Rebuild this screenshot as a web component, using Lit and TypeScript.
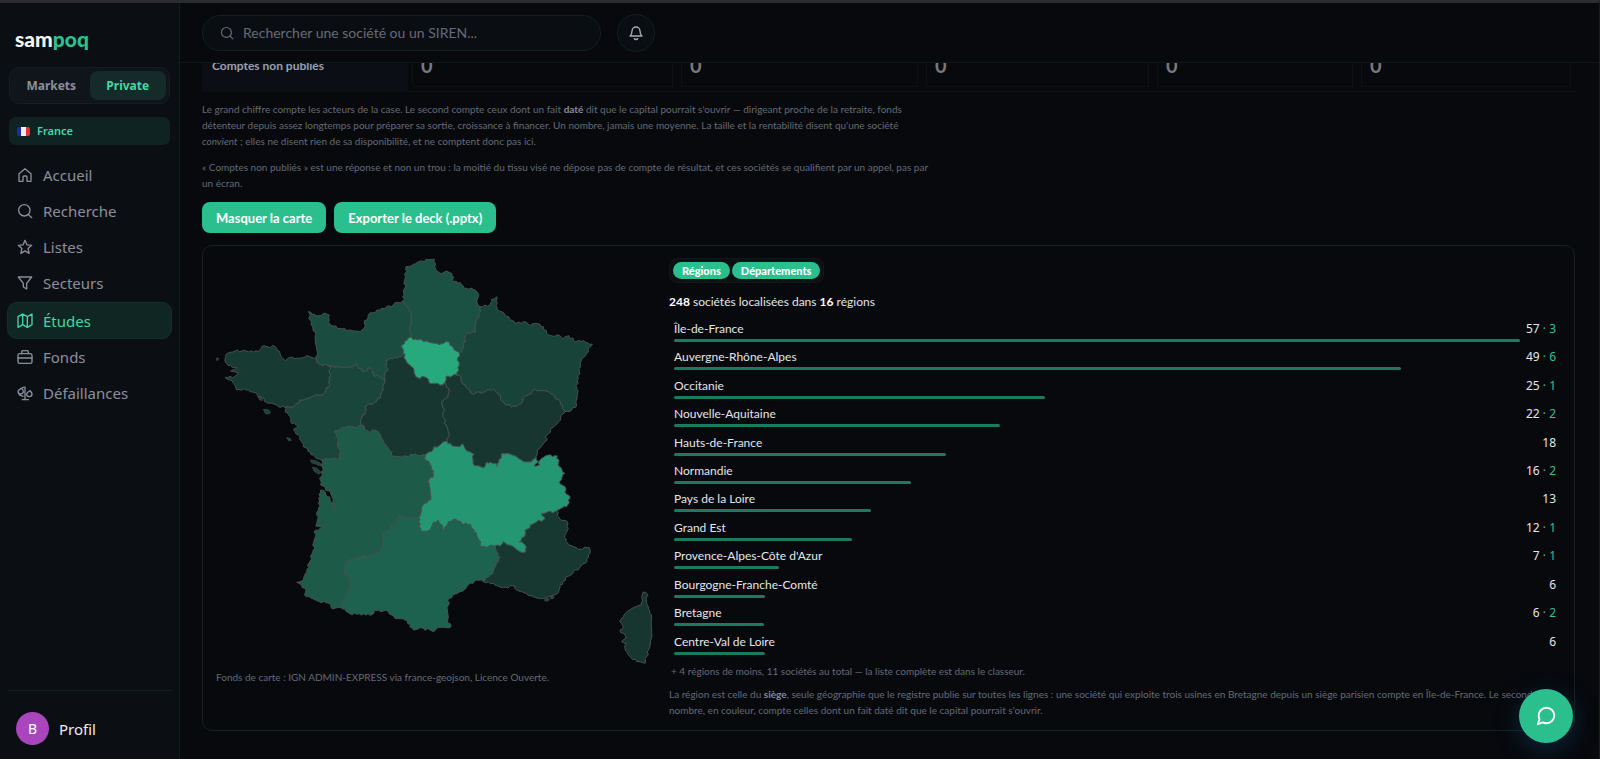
import { LitElement, html, css, svg, nothing } from "lit";
import { customElement } from "lit/decorators.js";
import { classMap } from "lit/directives/class-map.js";

type Pt = [number, number];

/* Coastlines and shared borders, each traced once and reused by both neighbours. */
const LINES: Record<string, string> = {
  hdfCoast: "1208,903 1212,885 1214,865 1216,830 1218,800 1240,793 1265,783 1285,779 1303,777 1307,807 1320,820 1340,813 1355,820 1362,845 1380,847 1393,865 1425,870 1437,883 1432,910 1440,920",
  hdfGe: "1440,920 1438,950 1427,970 1425,997 1405,999 1395,1010 1397,1020 1388,1045 1378,1060",
  hdfIdf: "1378,1060 1368,1053 1358,1040 1348,1027 1330,1031 1305,1030 1280,1023 1260,1017 1240,1020 1232,1011",
  hdfNor: "1232,1011 1232,975 1235,950 1225,925 1208,903",
  norCoast: "1208,903 1180,915 1145,925 1105,945 1093,970 1092,985 1080,995 1055,991 1020,985 995,978 985,967 988,945 970,940 955,947 925,935 930,960 938,980 947,1005 948,1035 950,1078",
  norBre: "950,1078 958,1093 990,1099",
  norPdl: "990,1099 1040,1101 1070,1092 1085,1113 1112,1105 1120,1123 1155,1143",
  norCvl: "1155,1143 1153,1130 1163,1105 1157,1080 1205,1070 1210,1057",
  norIdf: "1210,1057 1205,1035 1222,1020 1232,1011",
  idfCvl: "1210,1057 1218,1080 1235,1100 1248,1130 1280,1133 1290,1151 1320,1155 1335,1147",
  idfBfc: "1335,1147 1338,1130 1370,1125",
  idfGe: "1370,1125 1378,1095 1372,1080 1378,1060",
  geCoast: "1440,920 1470,915 1475,898 1490,890 1492,930 1515,945 1545,970 1570,965 1590,977 1605,970 1630,980 1645,1005 1670,1005 1690,1017 1707,1007 1720,1022 1750,1022 1777,1032 1760,1060 1743,1085 1735,1135 1730,1165 1730,1215 1710,1235 1692,1230",
  geBfc: "1692,1230 1678,1200 1645,1175 1605,1168 1570,1195 1565,1210 1535,1222 1505,1203 1500,1185 1480,1167 1450,1177 1412,1180 1395,1155 1382,1140 1380,1127 1370,1125",
  bfcCoast: "1692,1230 1688,1243 1675,1265 1640,1305 1638,1323 1612,1350 1608,1370",
  bfcAra: "1608,1370 1595,1385 1570,1385 1550,1370 1522,1360 1505,1360 1492,1400 1485,1390 1460,1387 1452,1403 1425,1398 1418,1375 1422,1363 1400,1353 1388,1332 1380,1340 1355,1337 1342,1325",
  bfcCvl: "1342,1325 1345,1295 1340,1275 1328,1250 1335,1230 1325,1205 1340,1195 1348,1175 1338,1153 1335,1147",
  cvlAra: "1342,1325 1328,1327 1318,1337 1302,1340 1295,1355 1276,1365",
  cvlNaq: "1276,1365 1240,1365 1205,1372 1180,1370 1165,1345 1150,1325 1130,1293 1105,1295 1085,1275",
  cvlPdl: "1085,1275 1085,1255 1097,1235 1095,1220 1130,1205 1150,1170 1155,1143",
  pdlNaq: "1085,1275 1070,1283 1040,1280 1002,1295 1015,1315 1020,1375 990,1377 965,1380",
  pdlCoast: "965,1380 945,1370 910,1340 900,1310 880,1290 895,1280 875,1270 870,1250 855,1235 862,1220",
  pdlBre: "862,1220 885,1217 900,1200 955,1185 970,1183 988,1160 990,1099",
  breCoast: "862,1220 835,1220 805,1210 780,1190 745,1170 710,1170 700,1150 675,1132 705,1130 715,1118 692,1113 710,1103 685,1097 675,1085 678,1063 705,1053 740,1053 775,1055 785,1040 825,1040 840,1060 857,1083 870,1072 900,1075 920,1067 950,1078",
  naqCoast: "965,1380 970,1410 958,1435 962,1455 985,1472 1000,1500 1008,1532 990,1500 975,1475 962,1470 955,1530 947,1578 970,1585 947,1590 940,1650 920,1715 910,1740 890,1747 915,1765 918,1790 950,1802 985,1810 1000,1827 1023,1823",
  naqOcc: "1023,1823 1025,1805 1045,1775 1052,1750 1045,1730 1032,1720 1040,1685 1070,1673 1115,1665 1140,1655 1150,1630 1150,1605 1180,1575 1198,1547 1225,1553 1258,1552",
  naqAra: "1258,1552 1265,1530 1275,1510 1292,1500 1290,1465 1285,1445 1300,1425 1295,1400 1275,1375 1276,1365",
  araOcc: "1258,1552 1262,1592 1285,1593 1300,1568 1315,1560 1333,1593 1345,1565 1367,1557 1385,1570 1410,1572 1430,1605 1445,1640 1487,1636",
  occPac: "1487,1636 1490,1655 1500,1672 1488,1695 1480,1715 1450,1745",
  occCoast: "1450,1745 1430,1740 1400,1760 1380,1775 1348,1795 1342,1830 1343,1860 1353,1880 1310,1885 1300,1895 1270,1885 1240,1890 1215,1860 1185,1855 1165,1835 1120,1830 1118,1843 1070,1843 1045,1838 1035,1827 1023,1823",
  araPac: "1487,1636 1500,1638 1510,1625 1530,1635 1560,1655 1577,1655 1575,1635 1558,1625 1575,1605 1575,1590 1610,1565 1635,1555 1625,1540 1670,1532",
  araCoast: "1670,1532 1700,1520 1710,1495 1695,1475 1695,1460 1678,1445 1695,1420 1678,1400 1672,1368 1645,1365 1620,1380 1618,1395 1602,1398 1615,1385 1608,1370",
  pacCoast: "1670,1532 1680,1558 1702,1565 1705,1585 1695,1605 1705,1635 1735,1648 1768,1643 1770,1660 1755,1690 1720,1715 1680,1755 1675,1778 1630,1795 1600,1790 1580,1780 1550,1770 1545,1758 1510,1762 1480,1750 1450,1745",
  corse: "1928,1778 1940,1780 1945,1820 1955,1850 1955,1900 1945,1950 1935,1990 1910,1985 1885,1965 1875,1945 1880,1932 1865,1925 1878,1915 1860,1890 1870,1880 1860,1865 1870,1850 1890,1830 1925,1815 1925,1790 1928,1778",
};

/* Breaks long straight runs into short irregular steps, deterministically. */
function roughen(pts: Pt[]): Pt[] {
  const out: Pt[] = [pts[0]];
  for (let i = 1; i < pts.length; i++) {
    const [ax, ay] = pts[i - 1];
    const [bx, by] = pts[i];
    const len = Math.hypot(bx - ax, by - ay);
    const steps = Math.max(1, Math.round(len / 7));
    for (let k = 1; k < steps; k++) {
      const t = k / steps;
      const n = Math.sin(ax * 12.9 + by * 78.2 + k * 37.7) * 43758.5;
      const d = (n - Math.floor(n) - 0.5) * 8;
      out.push([
        Math.round(ax + (bx - ax) * t - ((by - ay) / len) * d),
        Math.round(ay + (by - ay) * t + ((bx - ax) / len) * d),
      ]);
    }
    out.push([bx, by]);
  }
  return out;
}

const TRACED: Record<string, Pt[]> = Object.fromEntries(
  Object.entries(LINES).map(([k, v]) => [k, roughen(v.split(" ").map((p) => p.split(",").map(Number) as Pt))]),
);

/* A leading "-" walks the line backwards. */
function outline(keys: string): string {
  const pts = keys.split(" ").flatMap((k) => (k[0] === "-" ? [...TRACED[k.slice(1)]].reverse() : TRACED[k]));
  return "M" + pts.map((p) => p.join(" ")).join("L") + "Z";
}

const REGIONS = [
  { fill: "#1b5143", line: "hdfCoast hdfGe hdfIdf hdfNor" },
  { fill: "#1a4d40", line: "norCoast norBre norPdl norCvl norIdf hdfNor" },
  { fill: "#184338", line: "geCoast geBfc idfGe -hdfGe" },
  { fill: "#173a32", line: "breCoast norBre -pdlBre" },
  { fill: "#19453a", line: "pdlCoast pdlBre norPdl -cvlPdl pdlNaq" },
  { fill: "#16362f", line: "norCvl idfCvl -bfcCvl cvlAra cvlNaq cvlPdl" },
  { fill: "#16362f", line: "bfcCoast bfcAra bfcCvl idfBfc -geBfc" },
  { fill: "#1d5b48", line: "naqCoast naqOcc naqAra cvlNaq pdlNaq" },
  { fill: "#1d614f", line: "occCoast naqOcc araOcc occPac" },
  { fill: "#173830", line: "pacCoast -occPac araPac" },
  { fill: "#259672", line: "araCoast bfcAra cvlAra -naqAra araOcc araPac" },
  { fill: "#27a97d", line: "idfCvl idfBfc idfGe hdfIdf -norIdf" },
  { fill: "#16362f", line: "corse" },
];

const ISLETS = [
  "M651 1073l5 3-3 6-5-3z",
  "M790 1228l14 1 8 7-5 6-10-1z",
  "M860 1313l10 2 4 6-8 1z",
  "M775 1190l10 3 2 8-8-1z",
  "M931 1380l16 2 14 8 2 8-14-5-14-5z",
  "M937 1402l14 3 12 12-6 6-14-9z",
  "M1632 1800l12-6 4 6-8 4z",
  "M1653 1789l10 2-5 6-8-2z",
];

const ROWS: [string, number, number][] = [
  ["Île-de-France", 57, 3],
  ["Auvergne-Rhône-Alpes", 49, 6],
  ["Occitanie", 25, 1],
  ["Nouvelle-Aquitaine", 22, 2],
  ["Hauts-de-France", 18, 0],
  ["Normandie", 16, 2],
  ["Pays de la Loire", 13, 0],
  ["Grand Est", 12, 1],
  ["Provence-Alpes-Côte d'Azur", 7, 1],
  ["Bourgogne-Franche-Comté", 6, 0],
  ["Bretagne", 6, 2],
  ["Centre-Val de Loire", 6, 0],
];

const ICONS = {
  home: svg`<path d="M3 10 12 2.500l9 7.500v11.500h-6V15a1.500 1.500 0 0 0-1.500-1.500h-3A1.500 1.500 0 0 0 9 15v6.500H3z"/>`,
  search: svg`<circle cx="11" cy="11" r="8.500"/><path d="m22 22-4.800-4.800"/>`,
  star: svg`<path d="m12 2 2.900 6.700 7.100.8-5.300 4.800 1.500 7.200-6.200-3.700-6.200 3.700 1.500-7.200L2 9.500l7.100-.8z"/>`,
  filter: svg`<path d="M2 3h20l-7.500 9.500V21l-5-3v-5.500z"/>`,
  map: svg`<path d="M1.500 5.500v16l7-4 7 4 7-4v-16l-7 4-7-4zM8.500 1.500v16M15.500 5.500v16"/>`,
  fund: svg`<rect x="1.500" y="7" width="21" height="14.500" rx="2.500"/><path d="M7 7V4a1.500 1.500 0 0 1 1.500-1.500h7A1.500 1.500 0 0 1 17 4v3M1.500 13.500h21"/>`,
  scale: svg`<path d="M12 3v19M8 22h9M5.500 5.500 10 3.500M1.500 9.500a4 4 0 0 0 8 0c0-2-1.500-3-2.500-4.500-2 1.500-5.500 2.500-5.500 4.500zM14.500 13.500a4 4 0 0 0 8 0c0-2-2-3.500-3-5-2 1.500-5 3-5 5zM3 14.500l6 2.500"/>`,
  bell: svg`<path d="M6 9a6 6 0 0 1 12 0c0 5 3 7.500 3 7.500H3S6 14 6 9"/><path d="M9.500 20.500c.8 1.600 4.200 1.600 5 0"/>`,
  chat: svg`<path d="M21 11.500a8.400 8.400 0 0 1-8.500 8.400 8.700 8.700 0 0 1-4-.9L3 21l1.900-5.500a8.400 8.400 0 0 1-.9-4A8.400 8.400 0 0 1 12.500 3 8.400 8.400 0 0 1 21 11.500z"/>`,
};

const icon = (name: keyof typeof ICONS) =>
  html`<svg class="icon" viewBox="0 0 24 24" aria-hidden="true">${ICONS[name]}</svg>`;

const shared = css`
  * { box-sizing: border-box; }
  p, ul { margin: 0; padding: 0; }
  button { font: inherit; border: 0; cursor: pointer; }
  a { color: inherit; text-decoration: none; }
  .icon { display: block; width: 16px; height: 16px; fill: none; stroke: currentColor; stroke-width: 2; stroke-linecap: round; stroke-linejoin: round; }
`;

@customElement("side-nav")
class SideNav extends LitElement {
  static styles = [shared, css`
    :host { display: flex; flex-direction: column; width: 180px; flex: none; background: #0b0f14; border-right: 1px solid #10201f; color: #8b8f9b; }
    .logo { padding: 21px 15px 0; font: 900 21px/30px Lato, sans-serif; color: #f2f4f6; }
    .logo b { font-weight: 900; color: #2cc191; }
    .modes { display: flex; margin: 13px 9px 0; padding: 3px; border: 1px solid #151c23; border-radius: 10px; background: #10151c; height: 37px; }
    .mode { flex: 1; padding: 0; border-radius: 8px; background: none; color: #8b8f9b; font: 700 12px/29px "Noto Sans", sans-serif; }
    .mode.on { background: #142b29; color: #45d6a5; }
    .country { display: flex; align-items: center; gap: 7px; margin: 13px 9px 0; padding: 0 8px; height: 28px; border-radius: 7px; background: #0f2422; color: #45d6a5; font: 600 11px/28px "Noto Sans", sans-serif; }
    .flag { width: 13px; height: 9px; border-radius: 2px; display: block; }
    nav { display: flex; flex-direction: column; padding: 12px 7px 0; }
    .item { display: flex; align-items: center; gap: 10px; height: 36px; padding: 0 9px; border: 1px solid transparent; border-radius: 10px; font-size: 15px; line-height: 20px; }
    .item.on { height: 37px; margin-top: 1px; background: #0f2623; border-color: #14322d; color: #45d6a5; }
    .profile { display: flex; align-items: center; gap: 10px; margin: auto 7px 0; padding: 21px 9px 14px; border-top: 1px solid #10201f; color: #eceef1; font-size: 15px; line-height: 20px; }
    .avatar { display: grid; place-items: center; width: 33px; height: 33px; border-radius: 50%; background: #a946bd; color: #fff; font-size: 14px; }
  `];
  render() {
    const items: [keyof typeof ICONS, string][] = [
      ["home", "Accueil"], ["search", "Recherche"], ["star", "Listes"], ["filter", "Secteurs"],
      ["map", "Études"], ["fund", "Fonds"], ["scale", "Défaillances"],
    ];
    return html`
      <div class="logo">sam<b>poq</b></div>
      <div class="modes">
        <button class="mode">Markets</button><button class="mode on">Private</button>
      </div>
      <button class="country">
        <svg class="flag" viewBox="0 0 13 9" aria-hidden="true"><path fill="#1b2f9c" d="M0 0h4v9H0z"/><path fill="#f1f1f4" d="M4 0h5v9H4z"/><path fill="#e8303a" d="M9 0h4v9H9z"/></svg>
        France
      </button>
      <nav>
        ${items.map(([i, label]) => html`<a href="#" class=${classMap({ item: true, on: label === "Études" })}>${icon(i)}${label}</a>`)}
      </nav>
      <a href="#" class="profile"><span class="avatar">B</span>Profil</a>
    `;
  }
}

@customElement("top-bar")
class TopBar extends LitElement {
  static styles = [shared, css`
    :host { display: flex; align-items: center; gap: 16px; height: 60px; padding: 0 22px; background: #07090c; border-bottom: 1px solid #0e1717; position: relative; z-index: 1; }
    .search { display: flex; align-items: center; gap: 9px; width: 399px; height: 36px; padding: 0 17px; border: 1px solid #10221f; border-radius: 18px; background: #0a0e13; color: #666b77; }
    .search .icon { width: 14px; height: 14px; flex: none; }
    input { flex: 1; min-width: 0; border: 0; outline: 0; padding: 0; background: none; color: #d7dae0; font: 400 14px/20px Lato, sans-serif; }
    input::placeholder { color: #666b77; opacity: 1; }
    .bell { display: grid; place-items: center; width: 38px; height: 38px; padding: 0; border: 1px solid #10221f; border-radius: 50%; background: #0a0e13; color: #a9adb8; }
  `];
  render() {
    return html`
      <label class="search">${icon("search")}<input type="search" aria-label="Rechercher" placeholder="Rechercher une société ou un SIREN..."></label>
      <button class="bell" aria-label="Notifications">${icon("bell")}</button>
    `;
  }
}

@customElement("france-map")
class FranceMap extends LitElement {
  static styles = css`
    :host { display: block; }
    svg { display: block; width: 100%; height: auto; }
    path { stroke: #47524f; stroke-width: 3; stroke-linejoin: round; }
    .islet { fill: #1a453a; stroke-width: 2; }
  `;
  render() {
    return html`<svg viewBox="648 774 1320 1224" role="img" aria-label="Carte des régions">
      ${ISLETS.map((d) => svg`<path class="islet" d=${d} />`)}
      ${REGIONS.map((r) => svg`<path fill=${r.fill} d=${outline(r.line)} />`)}
    </svg>`;
  }
}

@customElement("region-list")
class RegionList extends LitElement {
  static styles = [shared, css`
    :host { display: block; }
    ul { display: grid; grid-auto-rows: 1fr; min-height: 341px; list-style: none; padding: 0 5px; }
    li { display: grid; grid-template-columns: 1fr auto; column-gap: 6px; row-gap: 2px; align-content: start; color: #e4e6ea; font-size: 12px; line-height: 17px; }
    .bar { height: 3px; border-radius: 2px; background: #1c7b5e; }
    .count { grid-column: 2; grid-row: 1 / 3; font-family: "Noto Sans", sans-serif; }
    .dated { color: #2cc191; }
  `];
  render() {
    const max = ROWS[0][1];
    return html`<ul>
      ${ROWS.map(([name, n, dated]) => html`<li>
        <span>${name}</span>
        <span class="count">${n}${dated ? html`<span class="dated"> · ${dated}</span>` : nothing}</span>
        <div class="bar" style="width:${(n / max) * 100}%"></div>
      </li>`)}
    </ul>`;
  }
}

@customElement("app-root")
class AppRoot extends LitElement {
  static styles = [shared, css`
    :host { display: flex; min-height: 100vh; border-top: 3px solid #2b2b30; border-right: 1px solid #1b1c20; box-sizing: border-box; background: #07090d; color: #e4e6ea; font-family: "Noto Sans", sans-serif; }
    main { flex: 1; min-width: 0; }
    .page { padding: 0 24px 24px 22px; font-family: Lato, "Noto Sans", sans-serif; }
    table { width: 100%; margin-top: -24px; border-collapse: collapse; table-layout: fixed; }
    .c0 { width: 206px; } .c1 { width: 269px; } .c2 { width: 245px; } .c3 { width: 231px; } .c4 { width: 204px; }
    th { height: 52px; padding: 0 10px; background: #0b0f15; color: #9aa0b4; text-align: left; font-size: 12px; font-weight: 700; }
    td { padding: 0 4px 4px; border-bottom: 1px solid #0c1416; }
    .cell { display: block; width: 100%; height: 48px; padding: 4px 8px 0; border: 1px solid #0b1215; background: none; color: #77797d; text-align: left; font-size: 20px; font-weight: 700; }
    .note { color: #646978; font-size: 10px; line-height: 16px; }
    .note b { color: #8489a0; }
    .first { max-width: 720px; padding-top: 9px; }
    .second { max-width: 732px; padding-top: 10px; }
    .actions { display: flex; gap: 8px; padding: 11px 0 12px; }
    .action { height: 31px; padding: 0 14px; border-radius: 8px; background: #2cbf8e; color: #fff; font-size: 13px; font-weight: 700; }
    .card { display: grid; grid-template-columns: minmax(0, 440px) minmax(0, 1fr); gap: 13px; padding: 12px 13px; border: 1px solid #0d2422; border-radius: 10px; }
    .credit { padding-top: 3px; }
    .scope { display: flex; width: fit-content; gap: 2px; padding: 3px; border: 1px solid #12171b; border-radius: 8px; background: #0c1013; }
    .pill { height: 17px; padding: 0 9px; border-radius: 9px; background: #2cbf8e; color: #fff; font-size: 11px; line-height: 17px; font-weight: 900; }
    .total { padding: 9px 0 8px; font-size: 12px; line-height: 20px; }
    .total b { color: #fff; }
    .more { padding: 2px 2px 7px; }
    .chat { position: fixed; right: 27px; bottom: 16px; display: grid; place-items: center; width: 54px; height: 54px; padding: 0; border-radius: 50%; background: #2cbf8e; color: #fff; box-shadow: 0 6px 24px rgba(30, 90, 150, .35); }
    .chat .icon { width: 22px; height: 22px; }
  `];
  render() {
    return html`
      <side-nav></side-nav>
      <main>
        <top-bar></top-bar>
        <div class="page">
          <table>
            <colgroup><col class="c0"><col class="c1"><col class="c2"><col class="c3"><col class="c4"><col></colgroup>
            <tr><th scope="row">Comptes non publiés</th>${[0, 0, 0, 0, 0].map((n) => html`<td><button class="cell">${n}</button></td>`)}</tr>
          </table>
          <p class="note first">Le grand chiffre compte les acteurs de la case. Le second compte ceux dont un fait <b>daté</b> dit que le capital pourrait s'ouvrir — dirigeant proche de la retraite, fonds détenteur depuis assez longtemps pour préparer sa sortie, croissance à financer. Un nombre, jamais une moyenne. La taille et la rentabilité disent qu'une société <i>convient</i> ; elles ne disent rien de sa disponibilité, et ne comptent donc pas ici.</p>
          <p class="note second">« Comptes non publiés » est une réponse et non un trou : la moitié du tissu visé ne dépose pas de compte de résultat, et ces sociétés se qualifient par un appel, pas par un écran.</p>
          <div class="actions">
            <button class="action">Masquer la carte</button>
            <button class="action">Exporter le deck (.pptx)</button>
          </div>
          <section class="card">
            <div>
              <france-map></france-map>
              <p class="note credit">Fonds de carte : IGN ADMIN-EXPRESS via france-geojson, Licence Ouverte.</p>
            </div>
            <div>
              <div class="scope"><button class="pill">Régions</button><button class="pill">Départements</button></div>
              <p class="total"><b>248</b> sociétés localisées dans <b>16</b> régions</p>
              <region-list></region-list>
              <p class="note more">+ 4 régions de moins, 11 sociétés au total — la liste complète est dans le classeur.</p>
              <p class="note">La région est celle du <b>siège</b>, seule géographie que le registre publie sur toutes les lignes : une société qui exploite trois usines en Bretagne depuis un siège parisien compte en Île-de-France. Le second nombre, en couleur, compte celles dont un fait daté dit que le capital pourrait s'ouvrir.</p>
            </div>
          </section>
        </div>
      </main>
      <button class="chat" aria-label="Discussion">${icon("chat")}</button>
    `;
  }
}
